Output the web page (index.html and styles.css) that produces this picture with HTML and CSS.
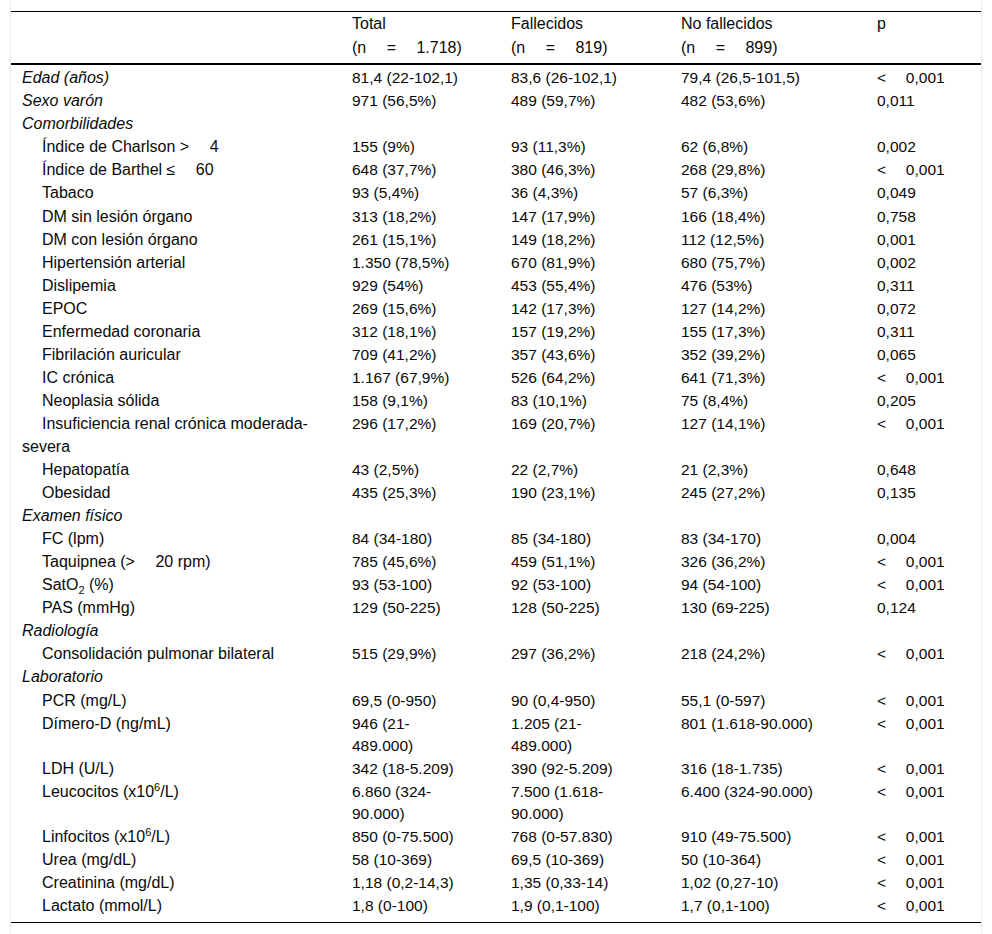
FILE: index.html
```html
<!DOCTYPE html>
<html lang="es">
<head>
<meta charset="utf-8">
<title>Tabla</title>
<link rel="stylesheet" href="styles.css">
</head>
<body>
<div class="wrap">
<table class="data">
<colgroup>
<col class="c1"><col class="c2"><col class="c3"><col class="c4"><col class="c5">
</colgroup>
<thead>
<tr>
<th></th>
<th class="n2">Total<br>(n&emsp; =&emsp; 1.718)</th>
<th class="n3">Fallecidos<br>(n&emsp; =&emsp; 819)</th>
<th>No fallecidos<br>(n&emsp; =&emsp; 899)</th>
<th>p</th>
</tr>
</thead>
<tbody>
<tr><td class="sec">Edad (años)</td><td class="n2">81,4 (22-102,1)</td><td class="n3">83,6 (26-102,1)</td><td>79,4 (26,5-101,5)</td><td>&lt;&emsp; 0,001</td></tr>
<tr><td class="sec">Sexo varón</td><td class="n2">971 (56,5%)</td><td class="n3">489 (59,7%)</td><td>482 (53,6%)</td><td>0,011</td></tr>
<tr><td class="sec">Comorbilidades</td><td class="n2"></td><td class="n3"></td><td></td><td></td></tr>
<tr><td class="sub">Índice de Charlson &gt;&emsp; 4</td><td class="n2">155 (9%)</td><td class="n3">93 (11,3%)</td><td>62 (6,8%)</td><td>0,002</td></tr>
<tr><td class="sub">Índice de Barthel ≤&emsp; 60</td><td class="n2">648 (37,7%)</td><td class="n3">380 (46,3%)</td><td>268 (29,8%)</td><td>&lt;&emsp; 0,001</td></tr>
<tr><td class="sub">Tabaco</td><td class="n2">93 (5,4%)</td><td class="n3">36 (4,3%)</td><td>57 (6,3%)</td><td>0,049</td></tr>
<tr><td class="sub">DM sin lesión órgano</td><td class="n2">313 (18,2%)</td><td class="n3">147 (17,9%)</td><td>166 (18,4%)</td><td>0,758</td></tr>
<tr><td class="sub">DM con lesión órgano</td><td class="n2">261 (15,1%)</td><td class="n3">149 (18,2%)</td><td>112 (12,5%)</td><td>0,001</td></tr>
<tr><td class="sub">Hipertensión arterial</td><td class="n2">1.350 (78,5%)</td><td class="n3">670 (81,9%)</td><td>680 (75,7%)</td><td>0,002</td></tr>
<tr><td class="sub">Dislipemia</td><td class="n2">929 (54%)</td><td class="n3">453 (55,4%)</td><td>476 (53%)</td><td>0,311</td></tr>
<tr><td class="sub">EPOC</td><td class="n2">269 (15,6%)</td><td class="n3">142 (17,3%)</td><td>127 (14,2%)</td><td>0,072</td></tr>
<tr><td class="sub">Enfermedad coronaria</td><td class="n2">312 (18,1%)</td><td class="n3">157 (19,2%)</td><td>155 (17,3%)</td><td>0,311</td></tr>
<tr><td class="sub">Fibrilación auricular</td><td class="n2">709 (41,2%)</td><td class="n3">357 (43,6%)</td><td>352 (39,2%)</td><td>0,065</td></tr>
<tr><td class="sub">IC crónica</td><td class="n2">1.167 (67,9%)</td><td class="n3">526 (64,2%)</td><td>641 (71,3%)</td><td>&lt;&emsp; 0,001</td></tr>
<tr><td class="sub">Neoplasia sólida</td><td class="n2">158 (9,1%)</td><td class="n3">83 (10,1%)</td><td>75 (8,4%)</td><td>0,205</td></tr>
<tr><td class="sub">Insuficiencia renal crónica moderada-severa</td><td class="n2">296 (17,2%)</td><td class="n3">169 (20,7%)</td><td>127 (14,1%)</td><td>&lt;&emsp; 0,001</td></tr>
<tr><td class="sub">Hepatopatía</td><td class="n2">43 (2,5%)</td><td class="n3">22 (2,7%)</td><td>21 (2,3%)</td><td>0,648</td></tr>
<tr><td class="sub">Obesidad</td><td class="n2">435 (25,3%)</td><td class="n3">190 (23,1%)</td><td>245 (27,2%)</td><td>0,135</td></tr>
<tr><td class="sec">Examen físico</td><td class="n2"></td><td class="n3"></td><td></td><td></td></tr>
<tr><td class="sub">FC (lpm)</td><td class="n2">84 (34-180)</td><td class="n3">85 (34-180)</td><td>83 (34-170)</td><td>0,004</td></tr>
<tr><td class="sub">Taquipnea (&gt;&emsp; 20 rpm)</td><td class="n2">785 (45,6%)</td><td class="n3">459 (51,1%)</td><td>326 (36,2%)</td><td>&lt;&emsp; 0,001</td></tr>
<tr><td class="sub">SatO<sub>2</sub> (%)</td><td class="n2">93 (53-100)</td><td class="n3">92 (53-100)</td><td>94 (54-100)</td><td>&lt;&emsp; 0,001</td></tr>
<tr><td class="sub">PAS (mmHg)</td><td class="n2">129 (50-225)</td><td class="n3">128 (50-225)</td><td>130 (69-225)</td><td>0,124</td></tr>
<tr><td class="sec">Radiología</td><td class="n2"></td><td class="n3"></td><td></td><td></td></tr>
<tr><td class="sub">Consolidación pulmonar bilateral</td><td class="n2">515 (29,9%)</td><td class="n3">297 (36,2%)</td><td>218 (24,2%)</td><td>&lt;&emsp; 0,001</td></tr>
<tr><td class="sec">Laboratorio</td><td class="n2"></td><td class="n3"></td><td></td><td></td></tr>
<tr><td class="sub">PCR (mg/L)</td><td class="n2">69,5 (0-950)</td><td class="n3">90 (0,4-950)</td><td>55,1 (0-597)</td><td>&lt;&emsp; 0,001</td></tr>
<tr><td class="sub">Dímero-D (ng/mL)</td><td class="n2">946 (21-489.000)</td><td class="n3">1.205 (21-489.000)</td><td>801 (1.618-90.000)</td><td>&lt;&emsp; 0,001</td></tr>
<tr><td class="sub">LDH (U/L)</td><td class="n2">342 (18-5.209)</td><td class="n3">390 (92-5.209)</td><td>316 (18-1.735)</td><td>&lt;&emsp; 0,001</td></tr>
<tr><td class="sub">Leucocitos (x10<sup>6</sup>/L)</td><td class="n2">6.860 (324-90.000)</td><td class="n3">7.500 (1.618-90.000)</td><td>6.400 (324-90.000)</td><td>&lt;&emsp; 0,001</td></tr>
<tr><td class="sub">Linfocitos (x10<sup>6</sup>/L)</td><td class="n2">850 (0-75.500)</td><td class="n3">768 (0-57.830)</td><td>910 (49-75.500)</td><td>&lt;&emsp; 0,001</td></tr>
<tr><td class="sub">Urea (mg/dL)</td><td class="n2">58 (10-369)</td><td class="n3">69,5 (10-369)</td><td>50 (10-364)</td><td>&lt;&emsp; 0,001</td></tr>
<tr><td class="sub">Creatinina (mg/dL)</td><td class="n2">1,18 (0,2-14,3)</td><td class="n3">1,35 (0,33-14)</td><td>1,02 (0,27-10)</td><td>&lt;&emsp; 0,001</td></tr>
<tr><td class="sub">Lactato (mmol/L)</td><td class="n2">1,8 (0-100)</td><td class="n3">1,9 (0,1-100)</td><td>1,7 (0,1-100)</td><td>&lt;&emsp; 0,001</td></tr>
</tbody>
</table>
</div>
</body>
</html>
```
FILE: styles.css
```css
html, body {
  margin: 0;
  padding: 0;
  background: #fff;
}
body {
  font-family: "Liberation Sans", Arial, sans-serif;
  font-size: 16px;
  color: #0a0a0a;
}
.wrap {
  margin: 0 10px;
  min-height: 934px;
  box-sizing: border-box;
  border-left: 1px solid #ececec;
  border-right: 1px solid #ececec;
  padding-top: 11px;
}
.data {
  width: 970px;
  table-layout: fixed;
  border-collapse: collapse;
  border-top: 1px solid #000;
  border-bottom: 1px solid #000;
}
.c1 { width: 330px; }
.c2 { width: 159px; }
.c3 { width: 170px; }
.c4 { width: 196px; }
.c5 { width: 115px; }
.data th {
  font-weight: normal;
  text-align: left;
  vertical-align: top;
  line-height: 24px;
  padding: 0 11px 3px 11px;
  border-bottom: 2px solid #000;
}
.data td {
  text-align: left;
  vertical-align: top;
  line-height: 22.1px;
  padding: 1px 11px 0 11px;
}
.data td + td {
  font-size: 15.5px;
}
.data tbody tr:first-child td {
  padding-top: 2px;
}
.data tbody tr:last-child td {
  padding-bottom: 5px;
}
.data .n2 { padding-right: 38px; }
.data .n3 { padding-right: 44px; }
.data td.sec { font-style: italic; }
.data td.sub { text-indent: 20px; }
sub, sup {
  font-size: 11px;
  line-height: 0;
}
```
